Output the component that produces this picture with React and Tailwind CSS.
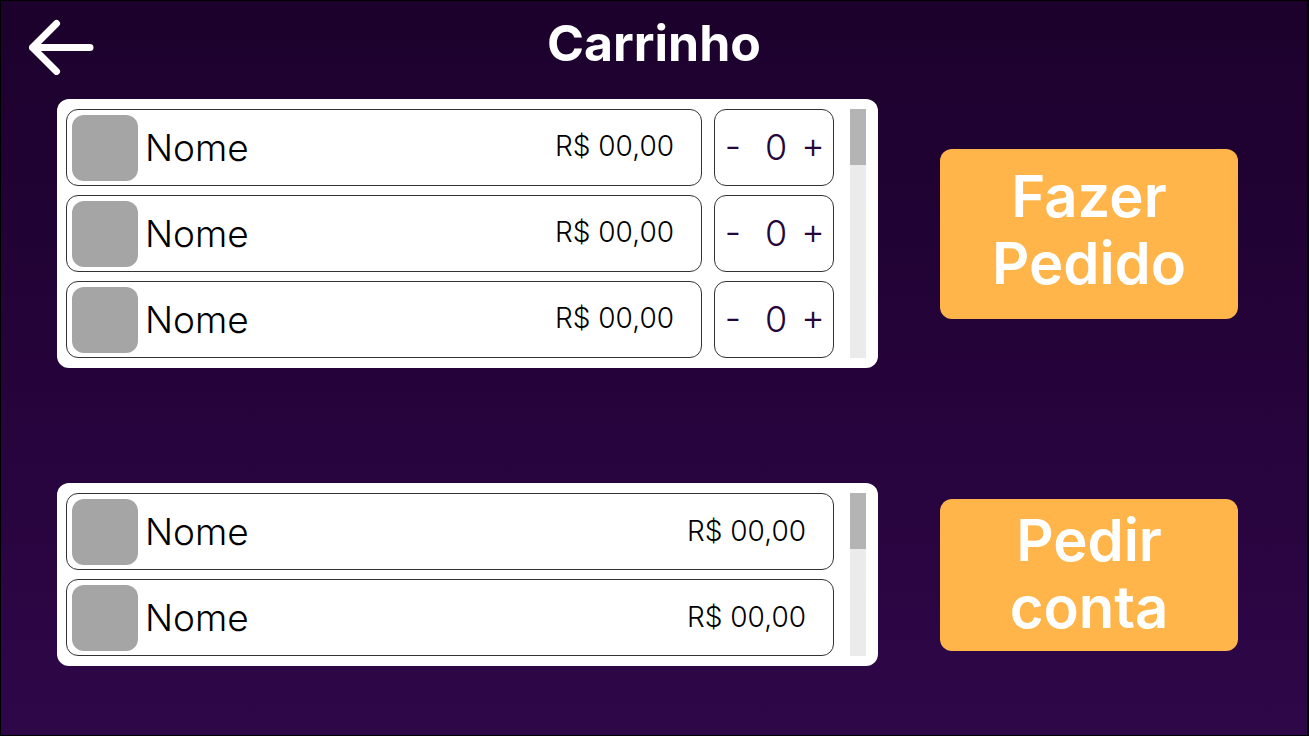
import { useState } from "react";

const cartItems = [
  { id: 1, name: "Nome", price: "R$ 00,00" },
  { id: 2, name: "Nome", price: "R$ 00,00" },
  { id: 3, name: "Nome", price: "R$ 00,00" },
];

const orderedItems = [
  { id: 1, name: "Nome", price: "R$ 00,00" },
  { id: 2, name: "Nome", price: "R$ 00,00" },
];

function BackIcon() {
  return (
    <svg
      className="h-14 w-[66px]"
      viewBox="0 0 66 56"
      fill="none"
      stroke="currentColor"
      strokeWidth="7"
      strokeLinecap="round"
      strokeLinejoin="round"
      aria-hidden="true"
    >
      <path d="M61 28.5H3.5M27.5 4.5L3.5 28.5l24 24" />
    </svg>
  );
}

function Item({ item, priceClass }) {
  return (
    <div className="flex h-[77px] min-w-0 flex-1 items-center rounded-xl border border-[#333] pr-[27px] pl-[5px]">
      <div className="size-[66px] shrink-0 rounded-xl bg-[#a5a5a5]" />
      <span className="ml-[7px] flex-1 text-[37px]/10 font-light">{item.name}</span>
      <span className={`text-[28px]/8 font-light ${priceClass}`}>{item.price}</span>
    </div>
  );
}

function Stepper() {
  const [count, setCount] = useState(0);
  return (
    <div className="flex h-[77px] w-[120px] shrink-0 items-center justify-between rounded-xl border border-[#333] px-2 text-4xl/10 font-light text-[#25063a]">
      <button type="button" aria-label="Diminuir" className="w-5 pb-1" onClick={() => setCount(Math.max(0, count - 1))}>
        -
      </button>
      <output className="pb-0.5 pl-2">{count}</output>
      <button type="button" aria-label="Aumentar" className="flex w-6 justify-center pb-1.5" onClick={() => setCount(count + 1)}>
        +
      </button>
    </div>
  );
}

function Panel({ children, label }) {
  return (
    <section
      aria-label={label}
      className="flex min-w-0 flex-1 gap-4 rounded-xl bg-white py-[10px] pr-3 pl-[9px] text-black"
    >
      <ul className="flex min-w-0 flex-1 flex-col gap-[9px]">{children}</ul>
      <div className="w-4 bg-[#ebebeb]">
        <div className="h-14 bg-[#b4b4b4]" />
      </div>
    </section>
  );
}

function ActionButton({ children, size }) {
  return (
    <button
      type="button"
      className={`w-[298px] shrink-0 rounded-xl bg-[#ffb54a] px-10 text-[58px]/[67px] font-semibold text-white ${size}`}
    >
      {children}
    </button>
  );
}

export default function App() {
  return (
    <div className="min-h-screen border-t border-r-2 border-b-2 border-l border-black bg-linear-to-b from-[#1c012c] to-[#2e0748] font-['Inter','Liberation_Sans',sans-serif] text-white">
      <header className="grid h-[98px] grid-cols-[1fr_auto_1fr] items-start px-7">
        <button type="button" aria-label="Voltar" className="mt-[18px] w-fit">
          <BackIcon />
        </button>
        <h1 className="mt-3 text-[50px]/[60px] font-bold">Carrinho</h1>
      </header>
      <main className="flex flex-col gap-[115px] pr-[69px] pb-[69px] pl-14">
        <div className="flex items-center gap-[62px]">
          <Panel label="Carrinho">
            {cartItems.map((item) => (
              <li key={item.id} className="flex gap-3">
                <Item item={item} priceClass="pb-1" />
                <Stepper />
              </li>
            ))}
          </Panel>
          <ActionButton size="h-[170px] pb-2">Fazer Pedido</ActionButton>
        </div>
        <div className="flex items-center gap-[62px]">
          <Panel label="Pedidos">
            {orderedItems.map((item) => (
              <li key={item.id} className="flex">
                <Item item={item} priceClass="pb-0.5" />
              </li>
            ))}
          </Panel>
          <ActionButton size="h-[152px] pb-0.5">Pedir conta</ActionButton>
        </div>
      </main>
    </div>
  );
}
